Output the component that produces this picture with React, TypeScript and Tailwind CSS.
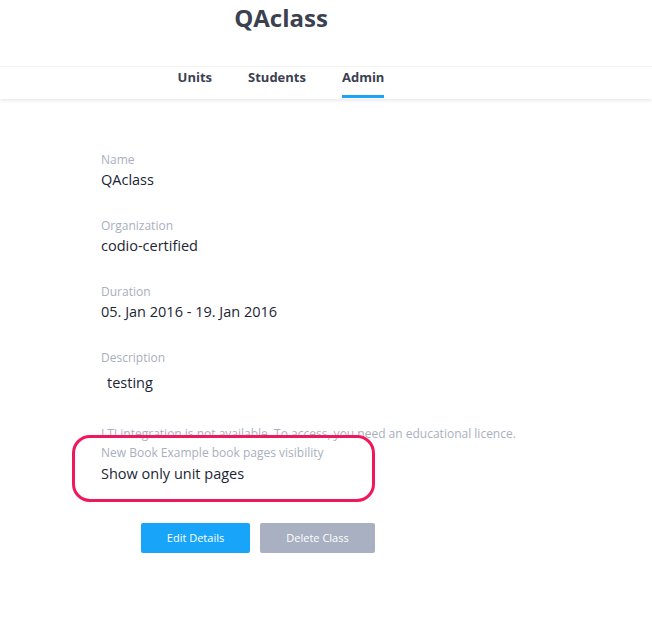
import React from "react";

const font = { fontFamily: '"Open Sans", "Liberation Sans", sans-serif' };

function Field({ label, value, valueClass = "" }: { label: string; value: string; valueClass?: string }) {
  return (
    <div className="mb-[28px]">
      <div className="text-[12px] leading-[16px] text-[#a9afbe]">{label}</div>
      <div className={"mt-[2px] text-[14.5px] leading-[20px] text-[#1c2535] " + valueClass}>{value}</div>
    </div>
  );
}

export default function App() {
  return (
    <div className="w-[652px] h-[618px] bg-white overflow-hidden" style={font}>
      <div className="h-[66px] w-[562px] pt-[2px] text-center">
        <h1 className="text-[24px] leading-[32px] font-bold text-[#3b4150]">QAclass</h1>
      </div>
      <div className="border-t border-[#f2f3f5] h-[33px] shadow-[0_2px_3px_rgba(0,0,0,0.08)]">
        <div className="w-[562px] flex justify-center gap-9">
          {["Units", "Students", "Admin"].map((t) => (
            <div key={t} className="flex flex-col items-stretch">
              <span className="text-[13px] leading-[20px] font-bold text-[#3a4150]">{t}</span>
              <div className={"mt-[8px] h-[3px] " + (t === "Admin" ? "bg-[#1aa3f7]" : "")} />
            </div>
          ))}
        </div>
      </div>
      <div className="relative pl-[101px] pt-[53px]">
        <Field label="Name" value="QAclass" />
        <Field label="Organization" value="codio-certified" />
        <Field label="Duration" value="05. Jan 2016 - 19. Jan 2016" />
        <div>
          <div className="text-[12px] leading-[16px] text-[#a9afbe]">Description</div>
          <div className="mt-[7px] pl-[6px] text-[14.5px] leading-[20px] text-[#1c2535]">testing</div>
        </div>
        <div className="mt-[33px] h-[15px] overflow-hidden text-[12px] leading-[16px] text-[#a9afbe]">
          LTI integration is not available. To access, you need an educational licence.
        </div>
        <div className="mt-[4px]">
          <div className="text-[12px] leading-[16px] text-[#a9afbe]">New Book Example book pages visibility</div>
          <div className="mt-[3px] text-[14.5px] leading-[20px] text-[#1c2535]">Show only unit pages</div>
        </div>
        <div className="mt-[39px] ml-[40px] flex gap-[10px]">
          <button className="w-[109px] h-[30px] rounded-[2px] bg-[#18a4f8] text-white text-[11px]">Edit Details</button>
          <button className="w-[115px] h-[30px] rounded-[2px] bg-[#a9b0c2] text-white text-[11px]">Delete Class</button>
        </div>
        <div className="absolute left-[72px] top-[336px] w-[303px] h-[67px] rounded-[18px] border-[3px] border-[#f0175a] pointer-events-none" />
      </div>
    </div>
  );
}
